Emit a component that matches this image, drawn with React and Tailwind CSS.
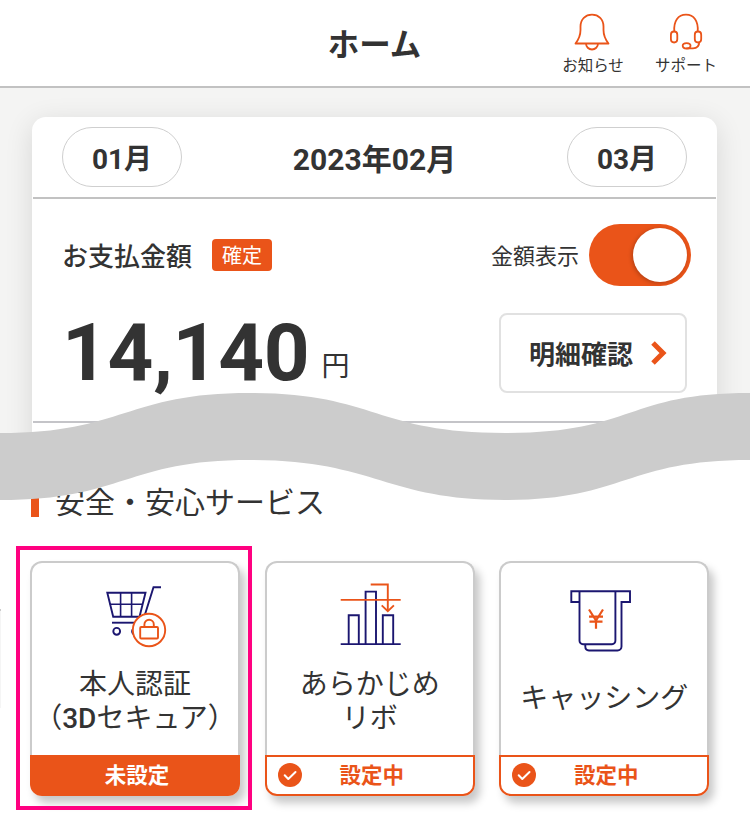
import React, { useState } from "react";

const BellIcon = () => (
    <svg className="w-[40px] h-[40px]" viewBox="0 0 40 40" fill="none" stroke="#ea5419" strokeWidth="1.8" strokeLinejoin="round">
        <path d="M2.5 31.5C6 27 7.5 23.5 7.5 18V14.5C7.5 7 12.5 2.7 19 2.7S30.5 7 30.5 14.5V18C30.5 23.5 32 27 35.5 31.5Z" />
        <path d="M13 31.5a6 6 0 0 0 12 0" />
    </svg>
)

const HeadsetIcon = () => (
    <svg className="w-[40px] h-[40px]" viewBox="0 0 40 40" fill="none" stroke="#ea5419" strokeWidth="1.8">
        <path d="M8.3 19.5C7.5 9 12 2.7 20 2.7S32.5 9 31.7 19.5" />
        <rect x="4.9" y="19.5" width="6.4" height="11" rx="3.2" />
        <rect x="28.8" y="19.5" width="6.4" height="11" rx="3.2" />
        <path d="M33.2 30.3C33.2 34.5 31.5 36.3 27 36.3H20.5" />
        <ellipse cx="20.6" cy="33.8" rx="3.9" ry="2.7" />
    </svg>
)

const CartIcon = () => (
    <svg className="w-[80px] h-[80px]" viewBox="0 0 80 80" fill="none" stroke="#1b1670" strokeWidth="1.9">
        <path d="M12.3 17.7H50.5L44.5 41.7H18.2Z" />
        <path d="M14.8 29.3H47.5M25.6 17.7V41.7M36.6 17.7V41.7" strokeWidth="1.6" />
        <path d="M66 12.2H58.5L49.5 41" />
        <path d="M17 47.7H42" />
        <circle cx="21.7" cy="56.3" r="3.4" />
        <circle cx="40.5" cy="56.3" r="3.4" />
        <circle cx="54" cy="55" r="16.2" fill="#fff" stroke="#ea5419" />
        <rect x="45.2" y="52" width="17.8" height="11.5" rx="1" stroke="#ea5419" strokeWidth="1.9" />
        <path d="M49.4 52V49.5a4.7 4.7 0 0 1 9.4 0V52" stroke="#ea5419" strokeWidth="1.9" />
    </svg>
)

const RevoIcon = () => (
    <svg className="w-[80px] h-[80px]" viewBox="0 0 80 80" fill="none" stroke="#1b1670" strokeWidth="1.9">
        <path d="M18.7 69V40.2H28.8V69M35.6 69V16.6H46V69M52.8 69V40.2H63.2V69" />
        <path d="M10.7 69.1H70.7" />
        <path d="M10.7 24.9H70.7M40.7 9.5H57.8V36" stroke="#ea5419" />
        <path d="M51.7 30.4L57.8 36.2L63.9 30.4" stroke="#ea5419" />
    </svg>
)

const CashIcon = () => (
    <svg className="w-[80px] h-[80px] -ml-[2px]" viewBox="0 0 80 80" fill="none" stroke="#1b1670" strokeWidth="1.9">
        <path d="M16.3 27H8.3V16.3H67V27H58.5V71.5a4 4 0 0 1-4 4H26a4 4 0 0 1-3.7-4V69.2" />
        <path d="M16.5 16.3V65.5a3.5 3.5 0 0 0 3.5 3.7H49a3.5 3.5 0 0 0 3.4-3.7V16.3" />
        <path d="M26 34.5L33 45.5L40 34.5M33 45.5V53.7M26 41.7H40M26.5 46.7H39.5" stroke="#ea5419" strokeWidth="2.2" />
    </svg>
)

const CheckIcon = () => (
    <svg className="w-[24px] h-[24px]" viewBox="0 0 24 24" fill="none">
        <circle cx="12" cy="12" r="12" fill="#ea5419" />
        <path d="M6.7 12.3L10.3 16L17.5 9" stroke="#fff" strokeWidth="2" strokeLinecap="round" strokeLinejoin="round" />
    </svg>
)

const services = [
    { id: 1, icon: <CartIcon />, lines: ["本人認証", <>（<span className="font-medium">3D</span>セキュア）</>], active: false },
    { id: 2, icon: <RevoIcon />, lines: ["あらかじめ", "リボ"], active: true },
    { id: 3, icon: <CashIcon />, lines: ["キャッシング"], active: true },
]

const ServiceCard = ({ item }) => {
    return (
        <div className="flex flex-col w-[210px] h-[235px] rounded-[12px] bg-white shadow-[5px_7px_8px_rgba(0,0,0,0.22)]">
            <div className="flex flex-col items-center flex-1 pt-[12px] border-2 border-b-0 border-[#cbcbcb] rounded-t-[12px]">
                {item.icon}
                <div className={`flex flex-col items-center justify-center h-[86px] text-[28px] leading-[34px] whitespace-nowrap ${item.lines.length > 1 ? "pt-[9px]" : "pt-[3px]"}`}>
                    {item.lines.map((line, i) => (
                        <span key={i}>{line}</span>
                    ))}
                </div>
            </div>
            {item.active ? (
                <div className="relative flex items-center justify-center h-[41px] border-2 border-[#ea5419] rounded-b-[12px] text-[#ea5419] text-[21.5px] leading-none font-bold pl-[4px] pt-px">
                    <span className="absolute left-[11px] top-[6px]"><CheckIcon /></span>
                    設定中
                </div>
            ) : (
                <div className="flex items-center justify-center h-[41px] bg-[#ea5419] rounded-b-[12px] text-white text-[21.5px] leading-none font-bold pl-[4px] pt-px">
                    未設定
                </div>
            )}
        </div>
    )
}

const App = () => {

    const [visible, setVisible] = useState(true);

    return (
        <div className="relative w-[750px] h-[839px] overflow-hidden bg-white text-[#333] font-[Roboto,'Noto_Sans_CJK_JP',sans-serif]">
            <header className="grid grid-cols-3 h-[88px] border-b-2 border-[#c2c2c2]">
                <h1 className="col-start-2 pt-[30px] pr-px text-center text-[31.5px] leading-[32px] font-bold">ホーム</h1>
                <nav className="flex pt-[12px] pl-[52px] text-[15.5px] leading-[20px]">
                    <a className="flex flex-col items-center w-[82px]">
                        <BellIcon />
                        <span className="pt-[4px] whitespace-nowrap">お知らせ</span>
                    </a>
                    <a className="flex flex-col items-center w-[104px]">
                        <HeadsetIcon />
                        <span className="pt-[4px] whitespace-nowrap">サポート</span>
                    </a>
                </nav>
            </header>

            <section className="h-[360px] px-[32px] pt-[29px] pr-[33px] bg-[#f4f4f3] overflow-hidden">
                <div className="h-[400px] rounded-[14px] bg-white shadow-[0_6px_28px_rgba(0,0,0,0.12)]">
                    <div className="flex items-center justify-between h-[82px] px-[29px] mx-px border-b-2 border-[#c2c2c2] font-bold">
                        <button className="w-[120px] h-[60px] pt-[5px] rounded-full border border-[#cfcfcf] text-[28px] leading-none">01月</button>
                        <span className="pt-[5px] text-[30px] leading-none">2023年02月</span>
                        <button className="w-[120px] h-[60px] pt-[5px] rounded-full border border-[#cfcfcf] text-[28px] leading-none">03月</button>
                    </div>
                    <div className="flex items-center h-[112px] pl-[30px] pr-[26px]">
                        <span className="pt-[3px] text-[26px] leading-none font-medium">お支払金額</span>
                        <span className="flex items-center justify-center w-[60px] h-[32px] ml-[20px] pt-[2px] rounded-[4px] bg-[#ea5419] text-white text-[20px] leading-none">確定</span>
                        <span className="ml-auto pt-[3px] text-[22px] leading-none">金額表示</span>
                        <button
                            className="flex justify-end w-[102px] h-[62px] ml-[10px] p-[4px] rounded-full bg-[#ea5419]"
                            onClick={() => setVisible(!visible)}
                        >
                            <span className="w-[54px] h-[54px] rounded-full bg-white shadow-[-1px_1px_4px_rgba(0,0,0,0.25)]"></span>
                        </button>
                    </div>
                    <div className="flex justify-between h-[112px] pl-[29px] pr-[29px] mx-px border-b-2 border-[#c4c4c8]">
                        <div className="flex items-start">
                            <span className="text-[80px] leading-[84px] font-bold tracking-[-0.3px]">{visible ? "14,140" : "***"}</span>
                            <span className="ml-[12px] mt-[42px] text-[28px] leading-[28px]">円</span>
                        </div>
                        <button className="flex items-center justify-center w-[188px] h-[80px] mt-[2px] pl-[10px] rounded-[8px] border-2 border-[#e1e1e1] text-[26px] leading-none font-bold">
                            <span className="pt-[3px]">明細確認</span>
                            <svg className="w-[16px] h-[24px] ml-[18px]" viewBox="0 0 16 24" fill="none" stroke="#ea5419" strokeWidth="5">
                                <path d="M2 2L12 12L2 22" />
                            </svg>
                        </button>
                    </div>
                </div>
            </section>

            <section className="pt-[36px]">
                <div className="flex items-center pl-[31px]">
                    <span className="w-[8px] h-[33px] bg-[#ea5419]"></span>
                    <h2 className="ml-[16px] pt-[4px] -mb-px text-[30px] leading-[30px]">安全・安心サービス</h2>
                </div>
                <div className="flex mt-[43.5px]">
                    <div className="w-[5px] h-[99px] mt-[48px] ml-[-4px] mr-[29px] border-t-2 border-[#cbcbcb] bg-[#f5f5f5]"></div>
                    <div className="flex gap-[24.7px]">
                        {services.map((item) => (
                            <ServiceCard key={item.id} item={item} />
                        ))}
                    </div>
                </div>
            </section>

            {/* torn strip between the two parts of the page */}
            <svg className="absolute left-0 top-0 w-[750px] h-[839px] pointer-events-none" viewBox="0 0 750 839">
                <path
                    fill="#ccc"
                    d="M0 433C125 433 125 393 250 393S375 433 505 433S625 393 750 393V460C625 460 625 500 505 500S375 460 250 460S125 500 0 500Z"
                />
            </svg>
            <div className="absolute left-[16px] top-[546px] w-[236px] h-[264px] border-4 border-[#ff0080] pointer-events-none"></div>
        </div>
    );

};

export default App;
